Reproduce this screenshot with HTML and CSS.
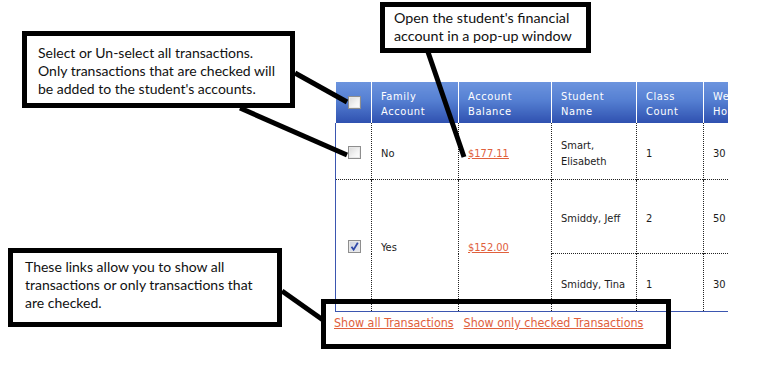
FILE: index.html
```html
<!DOCTYPE html>
<html>
<head>
<meta charset="utf-8">
<link rel="stylesheet" href="styles.css">
</head>
<body>
<div class="page">
  <div class="grid-wrap">
    <table class="grid">
      <thead>
        <tr class="head-row">
          <th class="c-chk"><span class="chk"></span></th>
          <th class="c-fam">Family<br>Account</th>
          <th class="c-bal">Account<br>Balance</th>
          <th class="c-name">Student<br>Name</th>
          <th class="c-cnt">Class<br>Count</th>
          <th class="c-hrs">Weekly<br>Hours</th>
        </tr>
      </thead>
      <tbody>
        <tr class="row-a">
          <td class="c-chk"><span class="chk"></span></td>
          <td>No</td>
          <td><a href="#" class="money">$177.11</a></td>
          <td>Smart,<br>Elisabeth</td>
          <td>1</td>
          <td class="c-hrs">30 min</td>
        </tr>
        <tr class="row-b">
          <td class="c-chk" rowspan="2"><span class="chk checked"><svg viewBox="0 0 13 13" width="13" height="13"><path d="M3.5 6.8 L5.6 9.6 L9.8 2.8" fill="none" stroke="#2f48a8" stroke-width="1.8"/></svg></span></td>
          <td rowspan="2">Yes</td>
          <td rowspan="2"><a href="#" class="money">$152.00</a></td>
          <td>Smiddy, Jeff</td>
          <td>2</td>
          <td class="c-hrs">50 min</td>
        </tr>
        <tr class="row-c">
          <td>Smiddy, Tina</td>
          <td>1</td>
          <td class="c-hrs">30 min</td>
        </tr>
      </tbody>
    </table>
  </div>
  <div class="links">
    <a href="#">Show all Transactions</a>
    <a href="#">Show only checked Transactions</a>
  </div>

  <svg class="pointers" width="758" height="366" viewBox="0 0 758 366">
    <line x1="295" y1="73" x2="347" y2="102"/>
    <line x1="240" y1="108" x2="347" y2="155"/>
    <line x1="428" y1="52" x2="464" y2="157"/>
    <line x1="282" y1="291" x2="323" y2="320"/>
  </svg>

  <div class="callout callout-select">Select or Un-select all transactions.<br>Only transactions that are checked will<br>be added to the student's accounts.</div>
  <div class="callout callout-popup">Open the student's financial<br>account in a pop-up window</div>
  <div class="callout callout-links">These links allow you to show all<br>transactions or only transactions that<br>are checked.</div>
  <div class="callout callout-frame"></div>
</div>
</body>
</html>
```

FILE: styles.css
```css
html, body {
  margin: 0;
  padding: 0;
  background: #ffffff;
}

.page {
  position: relative;
  width: 758px;
  height: 366px;
  overflow: hidden;
  padding: 82px 0 0 335px;
  box-sizing: border-box;
  font-family: "DejaVu Sans Condensed", "DejaVu Sans", sans-serif;
  font-size: 11px;
  color: #1c1c1c;
}

.grid-wrap {
  width: 393px;
  overflow: hidden;
}

.grid {
  border-collapse: collapse;
  table-layout: fixed;
  width: 460px;
}

.grid th,
.grid td {
  padding: 5px 0 0 9px;
  text-align: left;
  vertical-align: middle;
  line-height: 16px;
  white-space: nowrap;
  overflow: hidden;
}

.head-row th {
  height: 41px;
  box-sizing: border-box;
  padding-top: 3px;
  line-height: 15px;
  background: linear-gradient(to bottom, #6c94de 0%, #557fd2 45%, #2f51b0 100%);
  color: #ffffff;
  font-weight: normal;
  letter-spacing: 0.6px;
  border-left: 1px dotted #ffffff;
}

.head-row th.c-chk { border-left: none; padding-top: 0; }

.c-chk { width: 36px; }
.c-fam { width: 87px; }
.c-bal { width: 93px; }
.c-name { width: 85px; }
.c-cnt { width: 67px; }
.c-hrs { width: 92px; }

.grid th.c-chk,
.grid td.c-chk {
  padding-left: 12px;
}

.grid td.c-chk { padding-top: 0; }

.grid tbody td {
  border-left: 1px dotted #222;
  border-top: 1px dotted #222;
}

.grid tbody tr.row-a td { border-top: none; }

.grid tbody td.c-chk {
  border-left: 1px solid #3b56b0;
}

.grid tbody tr:last-child td,
.grid tbody td[rowspan] {
  border-bottom: 1px solid #3b56b0;
}

.row-a td { height: 51px; }
.row-b td { height: 68px; }
.row-c td { height: 52px; }
.row-a td.c-chk { height: 56px; }

.chk {
  display: block;
  width: 13px;
  height: 13px;
  box-sizing: border-box;
  border: 1px solid #8e8e8e;
  background: linear-gradient(135deg, #d8d8d8 0%, #f4f4f4 60%, #ffffff 100%);
  box-shadow: inset 0 0 0 1px #e8e8e8;
}

.row-a .chk { margin-top: 2px; }
.row-b .chk { margin-top: 1px; }

.chk svg {
  display: block;
  margin: -1px;
}

.chk.checked {
  background: linear-gradient(135deg, #cfd4e0 0%, #e6e9f0 100%);
}

.money {
  color: #e0603c;
  text-decoration: underline;
  text-decoration-color: #e0603c;
}

.links {
  display: flex;
  gap: 10px;
  margin: 3px 0 0 -1px;
  font-size: 12.4px;
  line-height: 16px;
}

.links a {
  color: #e0603c;
  text-decoration: underline;
}

.pointers {
  position: absolute;
  left: 0;
  top: 0;
  pointer-events: none;
}

.pointers line {
  stroke: #000;
  stroke-width: 5;
}

.callout {
  position: absolute;
  box-sizing: border-box;
  border: 5px solid #000;
  background: #fff;
  font-family: Lato, "Liberation Sans", sans-serif;
  font-size: 14px;
  line-height: 18px;
  color: #111;
  white-space: nowrap;
}

.callout-select {
  left: 22px;
  top: 31px;
  width: 273px;
  height: 77px;
  padding: 8px 0 0 11px;
}

.callout-popup {
  left: 380px;
  top: 2px;
  width: 211px;
  height: 51px;
  padding: 2px 0 0 9px;
  font-size: 14.3px;
}

.callout-links {
  left: 8px;
  top: 248px;
  width: 274px;
  height: 79px;
  padding: 5px 0 0 12px;
}

.callout-frame {
  left: 321px;
  top: 299px;
  width: 350px;
  height: 50px;
  background: transparent;
}
```
